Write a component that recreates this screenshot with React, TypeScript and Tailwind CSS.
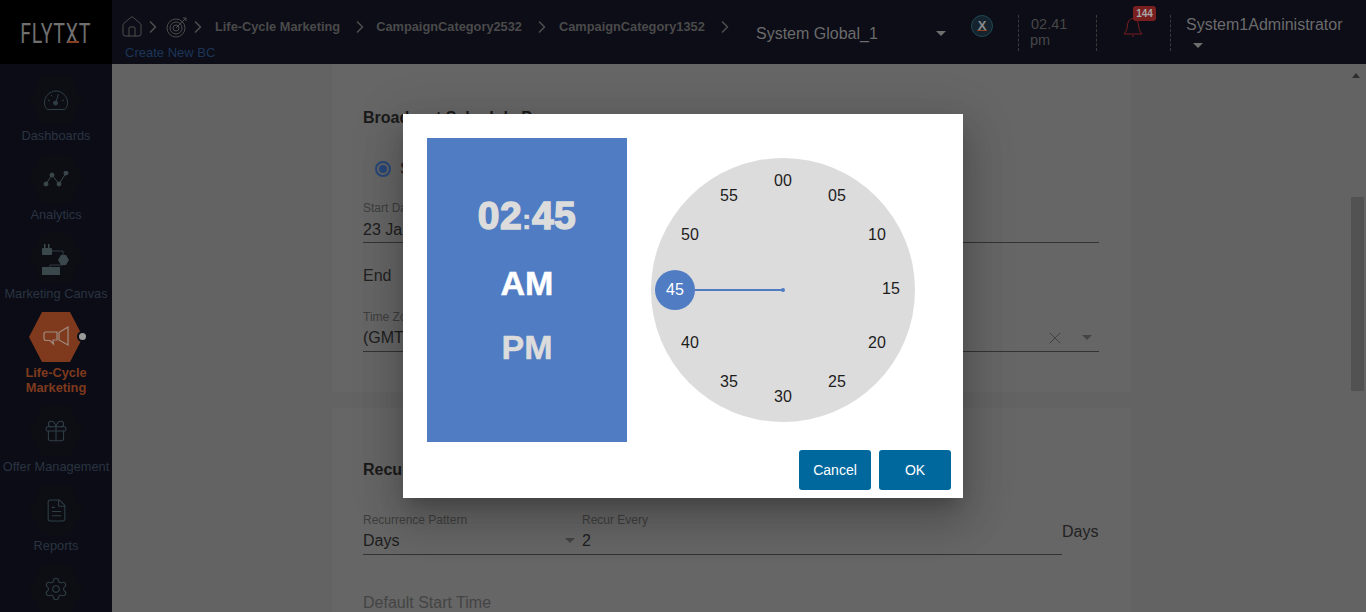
import React from "react";
import { ChevronRight, FileText, Gift, House, Settings, X } from "lucide-react";

const Hex = ({ active, children }: { active?: boolean; children: React.ReactNode }) => (
  <div className="relative h-[50px] w-[54px]">
    <svg viewBox="0 0 54 50" className="absolute inset-0 h-full w-full">
      <polygon points="0,25 13,0 41,0 54,25 41,50 13,50" fill={active ? "#7f3a1d" : "#0d0e14"} />
    </svg>
    <div className="absolute inset-0 flex items-center justify-center text-[#2f3e45]">{children}</div>
  </div>
);

const GaugeIcon = () => (
  <svg width="26" height="24" viewBox="0 0 26 24" fill="none" stroke="#2f3e45" strokeWidth="1">
    <path d="M3.5 21 C0.5 17 1 11 4 7.5 C9 1.5 17 1.5 22 7.5 C25 11 25.5 17 22.5 21 Q22 21.5 21 21.5 H5 Q4 21.5 3.5 21 Z" />
    <path d="M13 14 L15.5 6 M5 12 L7 13 M8 7 L9.5 8.5 M21 12 L19 13" />
    <circle cx="12.5" cy="15" r="2" fill="#2f3e45" />
  </svg>
);

const AnalyticsIcon = () => (
  <svg width="26" height="16" viewBox="0 0 26 16" fill="#3a474b" stroke="#3a474b" strokeWidth="1">
    <path d="M3 13 L9 4 L16 13 L23 2" fill="none" />
    <circle cx="3" cy="13" r="2" />
    <circle cx="9" cy="4" r="2" />
    <circle cx="16" cy="13" r="2" />
    <circle cx="23" cy="2" r="2" />
  </svg>
);

const CanvasIcon = () => (
  <svg width="30" height="36" viewBox="0 0 30 36" fill="#3a474b">
    <rect x="1" y="8" width="10" height="7" rx="1" />
    <rect x="3" y="4" width="1.5" height="4" />
    <rect x="7" y="4" width="1.5" height="4" />
    <path d="M11 11 H22 V15 M22 25 H9 V28" fill="none" stroke="#3a474b" strokeWidth="0.8" />
    <polygon points="17,20 20,15 25,15 28,20 25,25 20,25" />
    <rect x="1" y="27" width="18" height="8" />
  </svg>
);

const MegaphoneIcon = () => (
  <svg width="26" height="22" viewBox="0 0 26 22" fill="none" stroke="#a08a80" strokeWidth="1.2">
    <path d="M3 6 H14 V14 H10 L10.5 18 L7 14.5 H3 Q1 14.5 1 12 V8 Q1 6 3 6 Z" />
    <path d="M16 6.5 L25 1 V19 L16 14 Z" />
  </svg>
);

const TargetIcon = () => (
  <svg width="22" height="22" viewBox="0 0 22 22" fill="none" stroke="#4c4c4c" strokeWidth="1">
    <circle cx="10" cy="12" r="9" />
    <circle cx="10" cy="12" r="6" />
    <circle cx="10" cy="12" r="3" />
    <path d="M10 12 L20 2 M17 2 L20 2 L20 5" />
  </svg>
);

const menu = [
  { label: ["Dashboards"], icon: <GaugeIcon /> },
  { label: ["Analytics"], icon: <AnalyticsIcon /> },
  { label: ["Marketing Canvas"], icon: <CanvasIcon /> },
  { label: ["Life-Cycle", "Marketing"], icon: <MegaphoneIcon />, active: true },
  { label: ["Offer Management"], icon: <Gift size={26} strokeWidth={1} /> },
  { label: ["Reports"], icon: <FileText size={25} strokeWidth={1} /> },
  { label: [], icon: <Settings size={26} strokeWidth={1} /> },
];

const minutes = [
  { t: "00", x: 132, y: 23 },
  { t: "05", x: 186, y: 38 },
  { t: "10", x: 226, y: 77 },
  { t: "15", x: 240, y: 131 },
  { t: "20", x: 226, y: 185 },
  { t: "25", x: 186, y: 224 },
  { t: "30", x: 132, y: 239 },
  { t: "35", x: 78, y: 224 },
  { t: "40", x: 39, y: 185 },
  { t: "50", x: 39, y: 77 },
  { t: "55", x: 78, y: 38 },
];

const Divider = () => <div className="mt-[2px] h-9 border-l border-dashed border-[#3a3a3a]" />;
const Caret = ({ className = "" }: { className?: string }) => (
  <div className={`h-0 w-0 border-x-[5px] border-t-[5px] border-x-transparent border-t-[#6e6e6e] ${className}`} />
);
const Crumb = ({ className = "" }: { className?: string }) => (
  <ChevronRight size={20} strokeWidth={2} className={`shrink-0 text-[#4c4c4c] ${className}`} />
);

export default function App() {
  return (
    <div className="relative flex h-[612px] w-[1366px] flex-col overflow-hidden bg-[#636363] font-['Liberation_Sans',Arial,sans-serif]">
      {/* header */}
      <header className="flex h-16 shrink-0 bg-[#0c0d17]">
        <div className="relative flex w-28 items-center justify-center bg-black pt-[3px]">
          <span className="scale-x-[0.7] text-[28px] font-normal leading-none tracking-[1px] text-[#6f6f6f] font-['Roboto',sans-serif]">FLYTXT</span>
          <div className="absolute left-[68px] top-[41px] h-[2px] w-[11px] bg-[#8a3f1f]" />
        </div>
        <div className="w-[644px] shrink-0 pl-[8px]">
          <div className="flex h-[45px] items-center pt-[9px] text-[12.8px] font-bold text-[#4a4a4a]">
            <House size={24} strokeWidth={1} className="text-[#4c4c4c]" />
            <Crumb className="ml-[-1px] mr-[3px]" />
            <TargetIcon />
            <Crumb className="ml-0" />
            <span className="ml-[7px]">Life-Cycle Marketing</span>
            <Crumb className="ml-[10px]" />
            <span className="ml-[6px]">CampaignCategory2532</span>
            <Crumb className="ml-[10px]" />
            <span className="ml-[7px]">CampaignCategory1352</span>
            <Crumb className="ml-[10px]" />
          </div>
          <div className="-mt-[1px] pl-[5px] text-[13px] leading-[18px] text-[#1d3557]">Create New BC</div>
        </div>
        <div className="flex h-full items-center">
          <span className="w-[180px] pt-[4px] text-[16px] text-[#6b6b6b]">System Global_1</span>
          <Caret className="mt-[3px]" />
          <div className="relative ml-[25px] -mt-[13px] flex h-[22px] w-[22px] items-center justify-center rounded-full border border-[#1f4a52] bg-[#14232e]">
            <span className="text-[13px] font-bold text-[#8a8a8a]">X</span>
            <div className="absolute bottom-[5px] h-[1px] w-[10px] bg-[#8a3f1f]" />
          </div>
          <div className="ml-[25px]"><Divider /></div>
          <div className="ml-[11px] mt-0 w-[66px] text-[14.5px] leading-[16px] text-[#474747]">
            <div className="pl-[1px]">02.41</div>
            <div>pm</div>
          </div>
          <Divider />
          <div className="relative ml-[26px] -mt-[10px] w-[47px]">
            <svg width="20" height="20" viewBox="0 0 20 20" fill="none" stroke="#7a1f1f" strokeWidth="1">
              <path d="M1 17 C4 14 4 11 4.5 8 C5 3 7.5 1.5 10 1.5 C12.5 1.5 15 3 15.5 8 C16 11 16 14 19 17 Z" />
              <path d="M9 19 H11" />
            </svg>
            <div className="absolute -top-[11px] left-[10px] flex h-[15px] w-[23px] items-center justify-center rounded-[3px] bg-[#7a1f1f] text-[10px] font-bold text-[#a8a8a8]">144</div>
          </div>
          <Divider />
          <div className="ml-[15px] -mt-[1px]">
            <div className="text-[16px] leading-[20px] text-[#6b6b6b]">System1Administrator</div>
            <Caret className="ml-[7px] mt-[8px]" />
          </div>
        </div>
      </header>

      <div className="flex min-h-0 flex-1">
        {/* sidebar */}
        <aside className="flex w-28 shrink-0 flex-col items-center bg-[#0b0c16] pt-[11px]">
          {menu.map((item, i) => (
            <div key={i} className="relative flex shrink-0 flex-col items-center pb-[11px]">
              <Hex active={item.active}>{item.icon}</Hex>
              {item.active && (
                <div className="absolute left-[calc(50%+21px)] top-[19px] flex h-[11px] w-[11px] items-center justify-center rounded-full bg-[#0c0d17]">
                  <div className="h-[7px] w-[7px] rounded-full bg-[#9a9a9a]" />
                </div>
              )}
              <div className={`mt-[3px] whitespace-nowrap text-center text-[12.8px] leading-[15px] ${item.active ? "font-bold text-[#7f3a1d]" : "text-[#2a3441]"}`}>
                {item.label.map((l) => (
                  <div key={l}>{l}</div>
                ))}
              </div>
            </div>
          ))}
        </aside>

        {/* page behind the dialog */}
        <main className="relative flex-1 pl-[220px]">
          <section className="h-[328px] w-[799px] bg-[#666666] pl-[31px] pr-[32px] pt-[45px]">
            <h2 className="text-[16px] font-bold leading-[18px] text-[#1a1a1a]">Broadcast Schedule Page</h2>
            <div className="mt-[33px] flex items-center gap-[9px] pl-[12px]">
              <div className="flex h-4 w-4 items-center justify-center rounded-full border-2 border-[#27477a]">
                <div className="h-2 w-2 rounded-full bg-[#27477a]" />
              </div>
              <span className="text-[16px] leading-[18px] text-[#2a1a1a]">Start</span>
            </div>
            <div className="mt-[23px] text-[12px] leading-[14px] text-[#3e3e3e]">Start Date</div>
            <div className="border-b border-[#333] pb-[2px] pt-[4px] text-[16px] leading-[21px] text-[#1d1d1d]">23 Jan</div>
            <div className="mt-[23px] text-[16px] leading-[20px] text-[#222]">End</div>
            <div className="mt-[24px] text-[12px] leading-[14px] text-[#3e3e3e]">Time Zone</div>
            <div className="flex items-center border-b border-[#333] pb-[3px] pt-[3px] text-[16px] leading-[21px] text-[#1d1d1d]">
              <span>(GMT</span>
              <X size={20} strokeWidth={1} className="ml-auto text-[#3c3c3c]" />
              <Caret className="ml-[17px] mr-[7px] border-t-[#444]" />
            </div>
          </section>

          <section className="mt-[16px] h-[300px] w-[799px] bg-[#666666] pl-[31px] pr-[69px] pt-[53px]">
            <h2 className="text-[16px] font-bold leading-[18px] text-[#1a1a1a]">Recurrence</h2>
            <div className="mt-[34px] flex">
              <div className="flex-1 border-b border-[#333]">
                <div className="flex text-[12px] leading-[14px] text-[#3e3e3e]">
                  <span className="w-[219px]">Recurrence Pattern</span>
                  <span>Recur Every</span>
                </div>
                <div className="flex items-center pb-[3px] pt-[3px] text-[16px] leading-[21px] text-[#1d1d1d]">
                  <span className="w-[202px]">Days</span>
                  <Caret className="border-t-[#444]" />
                  <span className="ml-[7px]">2</span>
                </div>
              </div>
              <span className="-mr-[37px] w-[37px] pt-[7px] text-[16px] text-[#222]">Days</span>
            </div>
            <div className="mt-[38px] text-[16px] leading-[20px] text-[#444]">Default Start Time</div>
          </section>

          {/* scrollbar */}
          <div className="absolute right-[6px] top-[9px] h-0 w-0 border-x-[4px] border-b-[5px] border-x-transparent border-b-[#2e2e2e]" />
          <div className="absolute right-[2px] top-[133px] h-[194px] w-[13px] bg-[#525252]" />
        </main>
      </div>

      {/* time picker dialog */}
      <div className="absolute left-[403px] top-[114px] h-[384px] w-[560px] bg-white shadow-[0_11px_15px_-7px_rgba(0,0,0,.2),0_24px_38px_3px_rgba(0,0,0,.14),0_9px_46px_8px_rgba(0,0,0,.12)]">
        <div className="flex pl-6 pt-6">
          <div className="flex h-[304px] w-[200px] flex-col items-center bg-[#4f7cc3] font-bold">
            <div className="mt-[56px] text-[39px] leading-[44px] tracking-[0.5px] text-[#dcdcdc] [-webkit-text-stroke:1.5px_#dcdcdc]">02<span className="text-[28px] [-webkit-text-stroke:0.5px_#dcdcdc]">:</span>45</div>
            <div className="mt-[21px] text-[34px] leading-[40px] text-white [-webkit-text-stroke:0.5px_#ffffff]">AM</div>
            <div className="mt-[24px] text-[34px] leading-[40px] text-[#dcdcdc] [-webkit-text-stroke:0.5px_#dcdcdc]">PM</div>
          </div>
          <div className="relative ml-6 mt-5 h-[264px] w-[264px] rounded-full bg-[#dcdcdc] text-[16px] text-[#1d1d1d]">
            {minutes.map((m) => (
              <span
                key={m.t}
                className="absolute -translate-x-1/2 -translate-y-1/2 leading-none"
                style={{ left: m.x, top: m.y }}
              >
                {m.t}
              </span>
            ))}
            <div className="absolute left-[44px] top-[131px] h-[2px] w-[88px] bg-[#4f7cc3]" />
            <div className="absolute left-[130px] top-[130px] h-[4px] w-[4px] rounded-full bg-[#4f7cc3]" />
            <div className="absolute left-[4px] top-[112px] flex h-10 w-10 items-center justify-center rounded-full bg-[#4f7cc3] text-white">45</div>
          </div>
        </div>
        <div className="mt-2 flex justify-end gap-2 pr-3">
          <button className="h-10 w-[72px] rounded-[3px] bg-[#00689d] text-[14px] text-white">Cancel</button>
          <button className="h-10 w-[72px] rounded-[3px] bg-[#00689d] text-[14px] text-white">OK</button>
        </div>
      </div>
    </div>
  );
}
